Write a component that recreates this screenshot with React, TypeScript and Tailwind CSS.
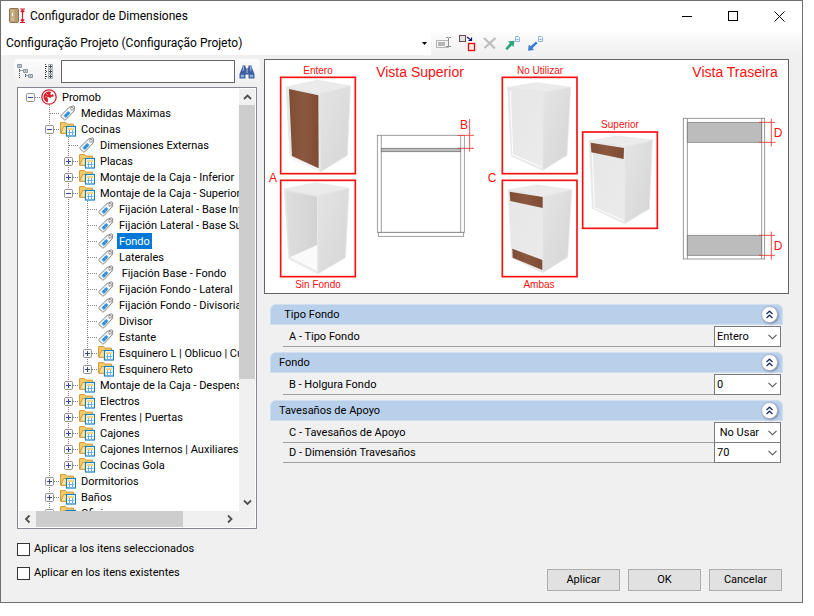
import { useState } from "react";
import type { ReactNode } from "react";
import { clsx } from "clsx";

type NodeKind = "root" | "folder" | "tag";

interface TreeNode {
  label: string;
  depth: number;
  kind: NodeKind;
  open?: boolean;
  last?: boolean;
}

const NODES: TreeNode[] = [
  { label: "Promob", depth: 0, kind: "root", open: true },
  { label: "Medidas Máximas", depth: 1, kind: "tag" },
  { label: "Cocinas", depth: 1, kind: "folder", open: true },
  { label: "Dimensiones Externas", depth: 2, kind: "tag" },
  { label: "Placas", depth: 2, kind: "folder" },
  { label: "Montaje de la Caja - Inferior", depth: 2, kind: "folder" },
  { label: "Montaje de la Caja - Superior", depth: 2, kind: "folder", open: true },
  { label: "Fijación Lateral - Base Inferior", depth: 3, kind: "tag" },
  { label: "Fijación Lateral - Base Superior", depth: 3, kind: "tag" },
  { label: "Fondo", depth: 3, kind: "tag" },
  { label: "Laterales", depth: 3, kind: "tag" },
  { label: " Fijación Base - Fondo", depth: 3, kind: "tag" },
  { label: "Fijación Fondo - Lateral", depth: 3, kind: "tag" },
  { label: "Fijación Fondo - Divisoria", depth: 3, kind: "tag" },
  { label: "Divisor", depth: 3, kind: "tag" },
  { label: "Estante", depth: 3, kind: "tag" },
  { label: "Esquinero L | Oblicuo | Curvo", depth: 3, kind: "folder" },
  { label: "Esquinero Reto", depth: 3, kind: "folder", last: true },
  { label: "Montaje de la Caja - Despensa", depth: 2, kind: "folder" },
  { label: "Electros", depth: 2, kind: "folder" },
  { label: "Frentes | Puertas", depth: 2, kind: "folder" },
  { label: "Cajones", depth: 2, kind: "folder" },
  { label: "Cajones Internos | Auxiliares", depth: 2, kind: "folder" },
  { label: "Cocinas Gola", depth: 2, kind: "folder", last: true },
  { label: "Dormitorios", depth: 1, kind: "folder" },
  { label: "Baños", depth: 1, kind: "folder" },
  { label: "Oficinas", depth: 1, kind: "folder" },
];

interface Field {
  id: string;
  label: string;
  options: string[];
}

const GROUPS: { title: string; fields: Field[] }[] = [
  {
    title: "  Tipo Fondo",
    fields: [{ id: "tipo-fondo", label: "A - Tipo Fondo", options: ["Entero", "Sin Fondo"] }],
  },
  {
    title: "Fondo",
    fields: [{ id: "holgura", label: "B - Holgura Fondo", options: ["0", "10", "20"] }],
  },
  {
    title: "Tavesaños de Apoyo",
    fields: [
      { id: "apoyo", label: "C - Tavesaños de Apoyo", options: [" No Usar", "Superior", "Ambas"] },
      { id: "dimension", label: "D - Dimensión Travesaños", options: ["70", "80", "100"] },
    ],
  },
];

/* ---------- tree ---------- */

// vertical line of an ancestor level; the root level has none
function Guide({ level }: { level: number }) {
  return (
    <svg width="19" height="16" viewBox="0 0 19 16" className="shrink-0" aria-hidden="true">
      {level > 0 && <path d="M9.5 0V16" stroke="#808080" strokeDasharray="1 1" />}
    </svg>
  );
}

function OwnCell({ node }: { node: TreeNode }) {
  return (
    <svg width="19" height="16" viewBox="0 0 19 16" className="shrink-0" aria-hidden="true">
      {node.depth > 0 && (
        <path d={node.last ? "M9.5 0V8" : "M9.5 0V16"} stroke="#808080" strokeDasharray="1 1" />
      )}
      <path d="M10 8.5H19" stroke="#808080" strokeDasharray="1 1" />
      {node.kind !== "tag" && (
        <>
          <rect x="5.5" y="4.5" width="8" height="8" rx="1" fill="#f8f8f8" stroke="#919191" />
          <path d="M7 8.5H12" stroke="#2f4a99" />
          {!node.open && <path d="M9.5 6V11" stroke="#2f4a99" />}
        </>
      )}
    </svg>
  );
}

function NodeIcon({ kind }: { kind: NodeKind }) {
  if (kind === "root") {
    return (
      <svg width="16" height="16" viewBox="0 0 16 16" className="shrink-0" aria-hidden="true">
        <circle cx="8" cy="8" r="7.2" fill="#fff" stroke="#d3222f" strokeWidth="1.3" />
        <path
          d="M8.3 2.4C5 2.3 2.5 4.7 2.5 8c0 2.6 1.8 4.8 4.3 5.4L7 10l-1-1.5 2-.6 1.2 1.3 1.2-1.5 2.5-.2c-.2-1-.6-1.8-1.2-2.4L10 6.3l-.7-1.5 1-1.9a6 6 0 0 0-2-.5z"
          fill="#d3222f"
        />
        <path d="M5 4.5l2 1.5M4 8l2-.5" stroke="#fff" strokeWidth=".5" />
      </svg>
    );
  }
  if (kind === "tag") {
    return (
      <svg width="16" height="16" viewBox="0 0 16 16" className="shrink-0" aria-hidden="true">
        <path
          d="M.8 10.6L9.3 2.3 13.3.8l1.5 1-.7 4.2-8.3 8.8-1.2.2L.8 11.5z"
          fill="#f4f4f4"
          stroke="#858585"
          strokeLinejoin="round"
        />
        <path d="M3.5 10.7l4.7-4.8 2.3 2.1-4.7 4.9z" fill="#3a9fe0" />
        <path d="M5 9.5l2.3 2.1M6.8 7.6l2.3 2.1" stroke="#1c6cab" strokeWidth=".7" />
        <circle cx="12" cy="3.7" r="1.4" fill="#fff" stroke="#858585" strokeWidth=".9" />
      </svg>
    );
  }
  return (
    <svg width="16" height="16" viewBox="0 0 16 16" className="shrink-0" aria-hidden="true">
      <path d="M.6 12V1.6h5l1.2 1.5h6.700V12z" fill="#f6cd68" stroke="#d2983a" />
      <path d="M.8 12.300L3.500 5.500h11.800v6.800z" fill="#fde29a" stroke="#d2983a" strokeLinejoin="round" />
      <rect x="6.500" y="5.500" width="9" height="9.500" fill="#fff" stroke="#1580bd" strokeWidth="1.200" />
      <path d="M8 8h6" stroke="#f0b840" strokeWidth="1.200" />
      <path d="M9.500 9V14M12.500 9V14M8 11.500h6" stroke="#6ab0dc" />
    </svg>
  );
}

function Tree() {
  const [selected, setSelected] = useState("Fondo");

  return (
    <div className="mx-[3px] mt-[3px] grid min-h-0 flex-1 grid-cols-[1fr_17px] grid-rows-[1fr_17px] border border-[#828790] bg-white">
      <ul role="tree" className="m-0 overflow-hidden pt-px pl-[3px]">
        {NODES.map((node) => (
          <li
            key={node.label}
            role="treeitem"
            aria-selected={selected === node.label}
            onClick={() => setSelected(node.label)}
            className="flex h-4 items-center"
          >
            {Array.from({ length: node.depth }, (_, i) => (
              <Guide key={i} level={i} />
            ))}
            <OwnCell node={node} />
            <span className="mr-[3px] ml-px shrink-0">
              <NodeIcon kind={node.kind} />
            </span>
            <span
              className={clsx(
                "h-4 px-0.5 leading-[18px] whitespace-pre",
                selected === node.label && "bg-[#0078d7] text-white"
              )}
            >
              {node.label}
            </span>
          </li>
        ))}
      </ul>
      {/* vertical bar */}
      <div className="mt-px mr-px flex flex-col items-center bg-[#f0f0f0]">
        <ScrollArrow d="M4.500 10L8 6.500 11.500 10" />
        <div className="w-full flex-[272] bg-[#cdcdcd]" />
        <div className="flex-[115]" />
        <ScrollArrow d="M4.500 5.500L8 9 11.500 5.500" />
      </div>
      {/* horizontal bar */}
      <div className="mb-px ml-px flex bg-[#f0f0f0]">
        <ScrollArrow d="M10 4.500L6.500 8 10 11.500" />
        <div className="flex-[147] bg-[#cdcdcd]" />
        <div className="flex-[39]" />
        <ScrollArrow d="M5.500 4.500L9 8 5.500 11.500" />
      </div>
      <div className="mr-px mb-px bg-[#f0f0f0]" />
    </div>
  );
}

function ScrollArrow({ d }: { d: string }) {
  return (
    <svg width="17" height="16" viewBox="0 0 16 16" className="shrink-0" aria-hidden="true">
      <path d={d} fill="none" stroke="#505050" strokeWidth="1.800" />
    </svg>
  );
}

/* ---------- preview drawing ---------- */

function Cabinet({ top, front, side }: { top: string; front: string; side: string }) {
  return (
    <g stroke="#e6e6e6" strokeWidth="2" strokeLinejoin="round">
      <polygon points={side} fill="url(#side)" />
      <polygon points={front} fill="url(#front)" />
      <polygon points={top} fill="#ebebeb" />
    </g>
  );
}

function Frame({ x, y }: { x: number; y: number }) {
  return <rect x={x} y={y} width="224" height="289" fill="none" stroke="#f91010" strokeWidth="5" />;
}

function Preview() {
  return (
    <div className="border border-[#646464] bg-white">
      <svg
        viewBox="1 1 523 233"
        className="block h-auto w-full font-['Liberation_Sans',sans-serif]"
        role="img"
        aria-label="Vista Superior y Vista Traseira"
      >
        <defs>
          <linearGradient id="side" x1="0" y1="0" x2="1" y2="1">
            <stop offset="0" stopColor="#e4e4e4" />
            <stop offset="1" stopColor="#d6d6d6" />
          </linearGradient>
          <linearGradient id="front" x1="0" y1="0" x2="1" y2="1">
            <stop offset="0" stopColor="#e6e6e6" />
            <stop offset="1" stopColor="#ebebeb" />
          </linearGradient>
          <linearGradient id="inside" x1="0" y1="0" x2="1" y2="0">
            <stop offset="0" stopColor="#dedede" />
            <stop offset="1" stopColor="#d2d2d2" />
          </linearGradient>
          <linearGradient id="wood" x1="0" y1="0" x2="1" y2="0">
            <stop offset="0" stopColor="#7f4d36" />
            <stop offset=".5" stopColor="#8b583e" />
            <stop offset="1" stopColor="#7e4b34" />
          </linearGradient>
        </defs>

        <g transform="translate(-2 -3) scale(.33333)">
          {/* A: entero */}
          <Cabinet
            top="72,93 166,73 265,90 172,113"
            front="72,93 172,113 176,347 84,305"
            side="172,113 265,90 256,298 176,347"
          />
          <polygon points="81,99 169,118 170,337 90,300" fill="url(#wood)" />
          <path d="M84 303L170 341" stroke="#fff" strokeWidth="3" />
          <Frame x={56} y={64} />
          {/* A: sin fondo */}
          <Cabinet
            top="67,399 160,380 261,397 168,417"
            front="67,399 168,417 168,653 80,608"
            side="168,417 261,397 250,605 168,653"
          />
          <polygon points="72,405 165,422 165,646 83,604" fill="url(#inside)" />
          <polygon points="83,604 165,567 165,646" fill="#fafafa" />
          <Frame x={56} y={373} />
          {/* top view */}
          <g fill="none" stroke="#8c8c8c" strokeWidth="2.500">
            <rect x="346" y="238" width="261" height="291" />
            <path d="M358 238V529M596 238V529" />
            <rect x="349" y="529" width="256" height="12" />
            <rect x="358" y="277" width="238" height="10" fill="#bcbcbc" stroke="#777" />
          </g>
          <path d="M623 189V287M586 238H636M586 277H636" stroke="#f03030" strokeWidth="2.500" />
        </g>

        <g transform="translate(206 -3) scale(.33333)">
          {/* C: no utilizar */}
          <Cabinet
            top="113,94 200,80 302,94 220,108"
            front="113,94 220,108 218,343 124,300"
            side="220,108 302,94 291,298 218,343"
          />
          <path d="M121 103L128 296L214 333" fill="none" stroke="#fff" strokeWidth="3" />
          <Frame x={97} y={64} />
          {/* C: ambas */}
          <Cabinet
            top="115,402 200,387 305,401 219,422"
            front="115,402 219,422 218,650 125,605"
            side="219,422 305,401 293,604 218,650"
          />
          <polygon points="119,407 218,423 218,456 121,435" fill="url(#wood)" />
          <polygon points="127,578 217,612 217,642 128,605" fill="url(#wood)" />
          <Frame x={97} y={373} />
          {/* C: superior */}
          <Cabinet
            top="358,254 442,240 547,252 465,272"
            front="358,254 465,272 464,503 367,457"
            side="465,272 547,252 538,458 464,503"
          />
          <polygon points="362,260 462,276 461,309 364,289" fill="url(#wood)" />
          <path d="M367 292L373 455L460 493" fill="none" stroke="#fff" strokeWidth="3" />
          <Frame x={338} y={228} />
        </g>

        {/* rear view */}
        <g transform="translate(396 -3) scale(.33333)">
          <g fill="#bcbcbc" stroke="#858585" strokeWidth="2.500">
            <rect x="82" y="199" width="223" height="60" />
            <rect x="82" y="538" width="223" height="60" />
            <rect x="70" y="187" width="244" height="422" fill="none" />
            <path d="M82 187V609M305 187V609" />
          </g>
          <path
            d="M334 188V271M297 199H345M297 259H347M334 527V611M297 538H345M297 598H345"
            stroke="#f03030"
            strokeWidth="2.500"
          />
        </g>

        <g fill="#f91010" textAnchor="middle" fontSize="10">
          <text x="54" y="15">Entero</text>
          <text x="54" y="229">Sin Fondo</text>
          <text x="276" y="15">No Utilizar</text>
          <text x="275" y="229">Ambas</text>
          <text x="356" y="69">Superior</text>
          <g fontSize="14">
            <text x="156" y="18">Vista Superior</text>
            <text x="471" y="18">Vista Traseira</text>
          </g>
          <g fontSize="12">
            <text x="9" y="123">A</text>
            <text x="200" y="70">B</text>
            <text x="228" y="123">C</text>
            <text x="514" y="78">D</text>
            <text x="514" y="191">D</text>
          </g>
        </g>
      </svg>
    </div>
  );
}

/* ---------- properties ---------- */

function FieldRow({ field }: { field: Field }) {
  return (
    <div className="-mt-px mr-0.5 ml-[13px] flex h-[21px] items-stretch">
      <label htmlFor={field.id} className="flex-1 border-b border-[#a0a0a0] pl-1.5 leading-[22px]">
        {field.label}
      </label>
      <div className="relative w-[67px]">
        <select
          id={field.id}
          className="h-full w-full appearance-none border border-[#7a7a7a] bg-white pl-0.5 leading-4 whitespace-pre outline-none"
        >
          {field.options.map((option) => (
            <option key={option}>{option.replace(/^ /, "\u00a0")}</option>
          ))}
        </select>
        <svg
          width="9"
          height="6"
          viewBox="0 0 9 6"
          className="pointer-events-none absolute top-2 right-1"
          aria-hidden="true"
        >
          <path d="M.5.8L4.500 4.800 8.500.8" fill="none" stroke="#505050" strokeWidth="1.100" />
        </svg>
      </div>
    </div>
  );
}

function PropertyGroup({ title, fields }: { title: string; fields: Field[] }) {
  const [open, setOpen] = useState(true);

  return (
    <section>
      <header className="mb-0.5 flex h-[21px] items-center justify-between rounded-t-md border border-[#cfdff1] bg-[#b9d0eb] pr-1 pl-2">
        <h2 className="leading-4 whitespace-pre">{title}</h2>
        <button
          type="button"
          aria-label="Contraer"
          onClick={() => setOpen(!open)}
          className="flex size-[17px] items-center justify-center rounded-full border border-[#a9b4c6] bg-white shadow-[1px_1px_2px_#7d8da8]"
        >
          <svg width="9" height="9" viewBox="0 0 9 9" aria-hidden="true">
            <path
              d="M1.500 4L4.500 1.200 7.500 4M1.500 8L4.500 5.200 7.500 8"
              fill="none"
              stroke="#1e3264"
              strokeWidth="1.300"
            />
          </svg>
        </button>
      </header>
      {open && fields.map((field) => <FieldRow key={field.id} field={field} />)}
    </section>
  );
}

/* ---------- window chrome ---------- */

function CaptionButton({ label, children }: { label: string; children: ReactNode }) {
  return (
    <button type="button" aria-label={label} className="flex w-[46px] items-center justify-center">
      <svg width="11" height="11" viewBox="0 0 11 11" fill="none" stroke="#000" aria-hidden="true">
        {children}
      </svg>
    </button>
  );
}

function TitleBar() {
  return (
    <div className="flex h-[30px] shrink-0 bg-white">
      <div className="flex flex-1 items-center gap-1 pl-2 text-xs">
        <svg width="17" height="16" viewBox="0 0 17 16" aria-hidden="true">
          <rect x=".5" y=".5" width="9" height="14" rx="1" fill="#b79a70" stroke="#8d6f4a" />
          <path d="M1.500 1.500h4v12h-4z" fill="#cdb48c" />
          <path d="M3.500 5v3" stroke="#fff" />
          <path
            d="M11 1h5M11 14.500h5M13.500 1.500v12.500M11.800 4l1.700-2 1.700 2M11.800 11.500l1.700 2 1.700-2"
            fill="none"
            stroke="#e0182d"
            strokeWidth="1.200"
          />
        </svg>
        <h1>Configurador de Dimensiones</h1>
      </div>
      <CaptionButton label="Minimizar">
        <path d="M0 5.500H10" />
      </CaptionButton>
      <CaptionButton label="Maximizar">
        <rect x=".5" y=".5" width="9" height="9" />
      </CaptionButton>
      <CaptionButton label="Cerrar">
        <path d="M.5.5L10.500 10.500M10.500.5L.5 10.500" />
      </CaptionButton>
    </div>
  );
}

function ToolButton({ label, children }: { label: string; children: ReactNode }) {
  return (
    <button type="button" aria-label={label} className="flex w-[23px] items-center justify-center">
      <svg width="18" height="18" viewBox="0 0 18 18" fill="none" aria-hidden="true">
        {children}
      </svg>
    </button>
  );
}

function PageGlyph() {
  return (
    <>
      <path d="M11.500 2.500h3l1 1v4h-4z" fill="#eef5fd" stroke="#8fb4dc" />
      <path d="M12.500 5.500h2" stroke="#7ba7dc" />
    </>
  );
}

function ToolBar() {
  return (
    <div className="flex h-6 shrink-0 bg-linear-to-b from-[#fdfdfd] to-[#f0f0f0]">
      <div className="relative w-[430px]">
        <select
          aria-label="Configuración"
          className="h-full w-full appearance-none bg-white pl-[5px] text-xs outline-none"
        >
          <option>Configuração Projeto (Configuração Projeto)</option>
        </select>
        <svg
          width="5"
          height="3"
          viewBox="0 0 5 3"
          className="pointer-events-none absolute top-[11px] right-1"
          aria-hidden="true"
        >
          <path d="M0 0h5L2.500 3z" fill="#000" />
        </svg>
      </div>
      <div className="flex pl-px">
        <ToolButton label="Renombrar">
          <rect x="1.500" y="6.500" width="12" height="7" fill="#f2f2f2" stroke="#b5b5b5" />
          <path d="M3 8h7v4H3z" fill="#b5b5b5" />
          <path d="M11 3.500h2l.5.5.5-.5h2M13.500 4v8M11 12.500h2l.5-.5.5.5h2" stroke="#8e8e8e" />
        </ToolButton>
        <ToolButton label="Copiar valores">
          <rect x="1.500" y="1.500" width="6" height="6" fill="#e4e4e4" stroke="#5d4a4a" />
          <rect x="10.500" y="9.500" width="6" height="7" fill="#e8eef2" stroke="#f00000" strokeWidth="1.300" />
          <path d="M9 3l4 3M13.500 3.500v3h-3" stroke="#101078" strokeWidth="1.200" />
        </ToolButton>
        <ToolButton label="Eliminar">
          <path d="M3 4l11 10.500M14.500 4L3.500 14" stroke="#bdbdbd" strokeWidth="2.200" />
        </ToolButton>
        <ToolButton label="Exportar">
          <path d="M1.500 14.500l1.500 1.800 5-5 1.500 2 1-6.500-6.500.5 1.800 1.700z" fill="#2fa37c" />
          <PageGlyph />
        </ToolButton>
        <ToolButton label="Importar">
          <path d="M9 7.500l1.500 1.800-5 5 1.500 1.800-6 .6.8-6.200 1.700 1.800z" fill="#3a7fd0" />
          <PageGlyph />
        </ToolButton>
      </div>
    </div>
  );
}

function SearchBar() {
  return (
    <div className="flex h-[25px] items-center rounded-sm bg-linear-to-b from-[#fdfdfd] to-[#f0f0f0] pr-0.5">
      <button type="button" aria-label="Expandir todo" className="flex w-[23px] justify-center">
        <svg width="17" height="17" viewBox="0 0 17 17" fill="none" aria-hidden="true">
          <path d="M2.500 4v12M2.500 7.500h4M8.500 9v6M8.500 12.500h4" stroke="#444" strokeDasharray="1 1" />
          <path d="M.5 1.500h4v3h-4zM6.500 6.500h4v3h-4zM11.500 11.500h4v3h-4z" fill="#fff" stroke="#8b98a8" />
          <path d="M1.500 3h2M7.500 8h2M12.500 13h2" stroke="#3d5270" />
        </svg>
      </button>
      <button type="button" aria-label="Contraer todo" className="flex w-6 justify-center">
        <svg width="10" height="17" viewBox="0 0 10 17" fill="none" aria-hidden="true">
          <path d="M1.500 1v15M2 3.500h3M2 8.500h3M2 13.500h3" stroke="#333" strokeDasharray="1 1" />
          <path
            d="M4.500 1.500h4v4h-4zM4.500 6.500h4v4h-4zM4.500 11.500h4v4h-4z"
            fill="#fff"
            stroke="#a3abb5"
          />
          <path d="M5 3.500h3M6.500 2v3M5 8.500h3M6.500 7v3M5 13.500h3M6.500 12v3" stroke="#444" />
        </svg>
      </button>
      <input
        type="text"
        aria-label="Buscar"
        className="h-[23px] min-w-0 flex-1 border border-[#646464] bg-white px-1 outline-none"
      />
      <button type="button" aria-label="Buscar" className="flex w-[23px] justify-center">
        <svg width="16" height="14" viewBox="0 0 16 14" aria-hidden="true">
          <path
            d="M3.500.5h3V2l.8 1.500h1.400L9.500 2V.5h3V2l1 2 2 5v4.500H9.500V9.500h-3v4H.5V9l2-5 1-2z"
            fill="#3d5f9f"
          />
          <path d="M1.800 9.800h3.400v2.400H1.800zM10.800 9.800h3.400v2.400h-3.400z" fill="#8fb0e0" />
          <path d="M4.500 1.500L4 6M11.500 1.500L12 6M8 4v4" fill="none" stroke="#a9c2e8" />
        </svg>
      </button>
    </div>
  );
}

function CheckRow({ label }: { label: string }) {
  return (
    <label className="ml-[3px] flex h-6 items-center gap-1">
      <input
        type="checkbox"
        className="size-[13px] appearance-none border border-[#333] bg-white checked:bg-[#0078d7]"
      />
      {label}
    </label>
  );
}

export default function App() {
  return (
    <div className="flex h-screen bg-white pr-[11px] pb-[13px]">
      <div className="flex min-w-0 flex-1 flex-col border border-[#707070] bg-[#f0f0f0] font-[Roboto,sans-serif] text-[11px] text-black">
        <TitleBar />
        <ToolBar />
        <main className="flex min-h-0 flex-1 gap-1 pt-1 pr-[13px] pb-[11px] pl-[13px]">
          <aside className="flex w-[246px] shrink-0 flex-col pb-1.5">
            <SearchBar />
            <Tree />
            <div className="mt-2">
              <CheckRow label="Aplicar a los itens seleccionados" />
              <CheckRow label="Aplicar en los itens existentes" />
            </div>
          </aside>
          <div className="flex min-w-0 flex-1 flex-col">
            <Preview />
            <div className="mx-1.5 mt-2.5 flex flex-col gap-[5px]">
              {GROUPS.map((group) => (
                <PropertyGroup key={group.title} title={group.title} fields={group.fields} />
              ))}
            </div>
            <div className="mt-auto mr-[7px] flex justify-end gap-2">
              {["Aplicar", "OK", "Cancelar"].map((label) => (
                <button
                  key={label}
                  type="button"
                  className="h-[22px] w-[73px] border border-[#adadad] bg-[#e1e1e1] hover:border-[#0078d7]"
                >
                  {label}
                </button>
              ))}
            </div>
          </div>
        </main>
      </div>
    </div>
  );
}
